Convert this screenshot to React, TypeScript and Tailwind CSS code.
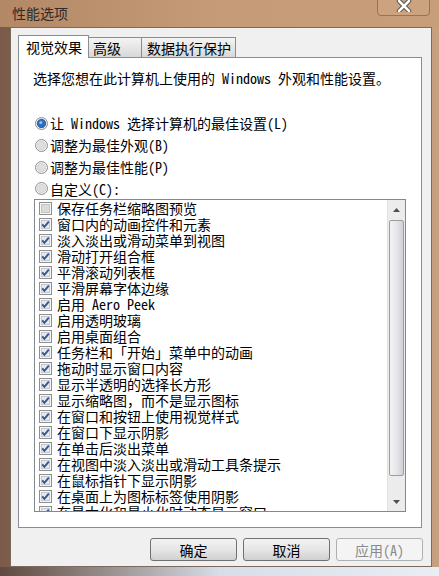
import React from "react";

const items: [string, boolean][] = [
  ["保存任务栏缩略图预览", false],
  ["窗口内的动画控件和元素", true],
  ["淡入淡出或滑动菜单到视图", true],
  ["滑动打开组合框", true],
  ["平滑滚动列表框", true],
  ["平滑屏幕字体边缘", true],
  ["启用 Aero Peek", true],
  ["启用透明玻璃", true],
  ["启用桌面组合", true],
  ["任务栏和「开始」菜单中的动画", true],
  ["拖动时显示窗口内容", true],
  ["显示半透明的选择长方形", true],
  ["显示缩略图，而不是显示图标", true],
  ["在窗口和按钮上使用视觉样式", true],
  ["在窗口下显示阴影", true],
  ["在单击后淡出菜单", true],
  ["在视图中淡入淡出或滑动工具条提示", true],
  ["在鼠标指针下显示阴影", true],
  ["在桌面上为图标标签使用阴影", true],
  ["在最大化和最小化时动态显示窗口", true],
];

const radios = [
  "让 Windows 选择计算机的最佳设置(L)",
  "调整为最佳外观(B)",
  "调整为最佳性能(P)",
  "自定义(C):",
];

const Check = ({ on }: { on: boolean }) => (
  <svg width="13" height="13" viewBox="0 0 13 13" className="shrink-0">
    <rect x="0.5" y="0.5" width="12" height="12" fill="#f6f6f6" stroke="#8e8f8f" />
    <rect x="2.5" y="2.5" width="8" height="8" fill={on ? "#e4e8ef" : "#d9dadc"} stroke={on ? "#c3c9d4" : "#c4c5c7"} />
    {on && (
      <path d="M3.2 6.4 L5.4 8.9 L9.8 3.6" fill="none" stroke="#3d5489" strokeWidth="1.9" />
    )}
  </svg>
);

const Radio = ({ on }: { on: boolean }) => (
  <svg width="13" height="13" viewBox="0 0 13 13" className="shrink-0">
    <circle cx="6.5" cy="6.5" r="6" fill="#f2f2f2" stroke="#8e8f8f" />
    <circle cx="6.5" cy="6.5" r="4.2" fill={on ? "#2c6fc0" : "#dedede"} stroke={on ? "#1b4f90" : "#cfcfcf"} strokeWidth="0.8" />
    {on && <circle cx="5.8" cy="5.6" r="1.5" fill="#8fc4f5" />}
  </svg>
);

export default function App() {
  return (
    <div
      className="w-[439px] h-[576px] overflow-hidden relative flex flex-col bg-linear-to-r from-[#7a5a48] via-[#b88c6b] to-[#c7a07f]"
      style={{ fontFamily: "'Noto Sans Mono CJK SC', 'Noto Sans CJK SC', sans-serif" }}
    >
      {/* title bar */}
      <div className="h-[27px] shrink-0 flex items-center pl-[12px] text-[14px] text-[#2e2a28] bg-linear-to-r from-[#b38866] via-[#c69b77] to-[#c89d79]">
        性能选项
      </div>
      <div className="absolute top-[-4px] right-[9px] w-[53px] h-[20px] rounded-[4px] border border-[#8e7462] bg-[#cfa684]/60 flex items-center justify-center">
        <svg width="16" height="12" viewBox="0 0 16 12">
          <path d="M3 1 L13 11 M13 1 L3 11" stroke="#4a4a4a" strokeWidth="4.5" strokeLinecap="round" />
          <path d="M3 1 L13 11 M13 1 L3 11" stroke="#ffffff" strokeWidth="2.5" strokeLinecap="round" />
        </svg>
      </div>

      {/* client area */}
      <div className="flex-1 ml-[10px] mr-[7px] bg-[#f0f0f0] border border-[#7d6a5e] flex flex-col pt-[7px] pl-[7px] pr-[8px] pb-[5px] text-[14px] text-black">
        {/* tabs */}
        <div className="h-[22px] flex items-end relative z-10">
          <div className="w-[71px] h-[23px] -mb-px bg-white border border-b-0 border-[#898c95] flex items-center pl-[7px] leading-[16px]">
            视觉效果
          </div>
          <div className="w-[53px] h-[20px] bg-linear-to-b from-[#f4f4f4] to-[#d8d8d8] border border-l-0 border-b-0 border-[#898c95] flex items-center pl-[4px] leading-[16px]">
            高级
          </div>
          <div className="w-[94px] h-[20px] bg-linear-to-b from-[#f4f4f4] to-[#d8d8d8] border border-l-0 border-b-0 border-[#898c95] flex items-center pl-[5px] leading-[16px]">
            数据执行保护
          </div>
        </div>

        {/* panel */}
        <div className="w-[404px] h-[471px] bg-white border border-[#898c95] pl-[14px] pt-[12px] flex flex-col">
          <div className="h-[16px] leading-[16px] whitespace-nowrap">
            选择您想在此计算机上使用的 Windows 外观和性能设置。
          </div>

          <div className="mt-[26px] flex flex-col">
            {radios.map((r, i) => (
              <div key={r} className={`${i === 3 ? "h-[21px]" : "h-[22px]"} flex items-center gap-[2px] pl-[2px] leading-[16px] whitespace-nowrap`}>
                <Radio on={i === 0} />
                <span>{r}</span>
              </div>
            ))}
          </div>

          {/* list box */}
          <div className="ml-px w-[372px] h-[313px] border border-[#828790] flex">
            <div className="flex-1 overflow-hidden">
              {items.map(([t, on]) => (
                <div key={t} className="h-[16px] flex items-center gap-[5px] pl-[4px] leading-[16px] whitespace-nowrap">
                  <Check on={on} />
                  <span>{t}</span>
                </div>
              ))}
            </div>
            <div className="w-[18px] bg-[#ececec] border-l border-[#e2e2e2] flex flex-col">
              <div className="h-[20px] flex items-center justify-center">
                <svg width="7" height="4" viewBox="0 0 7 4">
                  <path d="M0 4 L3.5 0 L7 4 Z" fill="#505050" />
                </svg>
              </div>
              <div className="h-[256px] mx-px rounded-[2px] border border-[#9a9ea6] bg-linear-to-r from-[#f3f3f3] via-[#e6e7ea] to-[#cfd1d6]" />
              <div className="flex-1" />
              <div className="h-[18px] flex items-center justify-center">
                <svg width="7" height="4" viewBox="0 0 7 4">
                  <path d="M0 0 L7 0 L3.5 4 Z" fill="#505050" />
                </svg>
              </div>
            </div>
          </div>
        </div>

        {/* buttons */}
        <div className="mt-[10px] flex justify-end gap-[6px]">
          <button className="w-[87px] h-[23px] rounded-[3px] border border-[#707070] bg-linear-to-b from-[#f2f2f2] via-[#e6e6e6] to-[#d0d0d0] leading-[16px]">
            确定
          </button>
          <button className="w-[87px] h-[23px] rounded-[3px] border border-[#707070] bg-linear-to-b from-[#f2f2f2] via-[#e6e6e6] to-[#d0d0d0] leading-[16px]">
            取消
          </button>
          <button className="w-[87px] h-[23px] rounded-[3px] border border-[#adb2b5] bg-[#f4f4f4] text-[#8a8a8a] leading-[16px]">
            应用(A)
          </button>
        </div>
      </div>

      {/* bottom frame edge */}
      <div className="h-[9px] shrink-0 bg-linear-to-r from-[#5e4a40] via-[#d6dee8] to-[#e9eef4]" />
    </div>
  );
}
